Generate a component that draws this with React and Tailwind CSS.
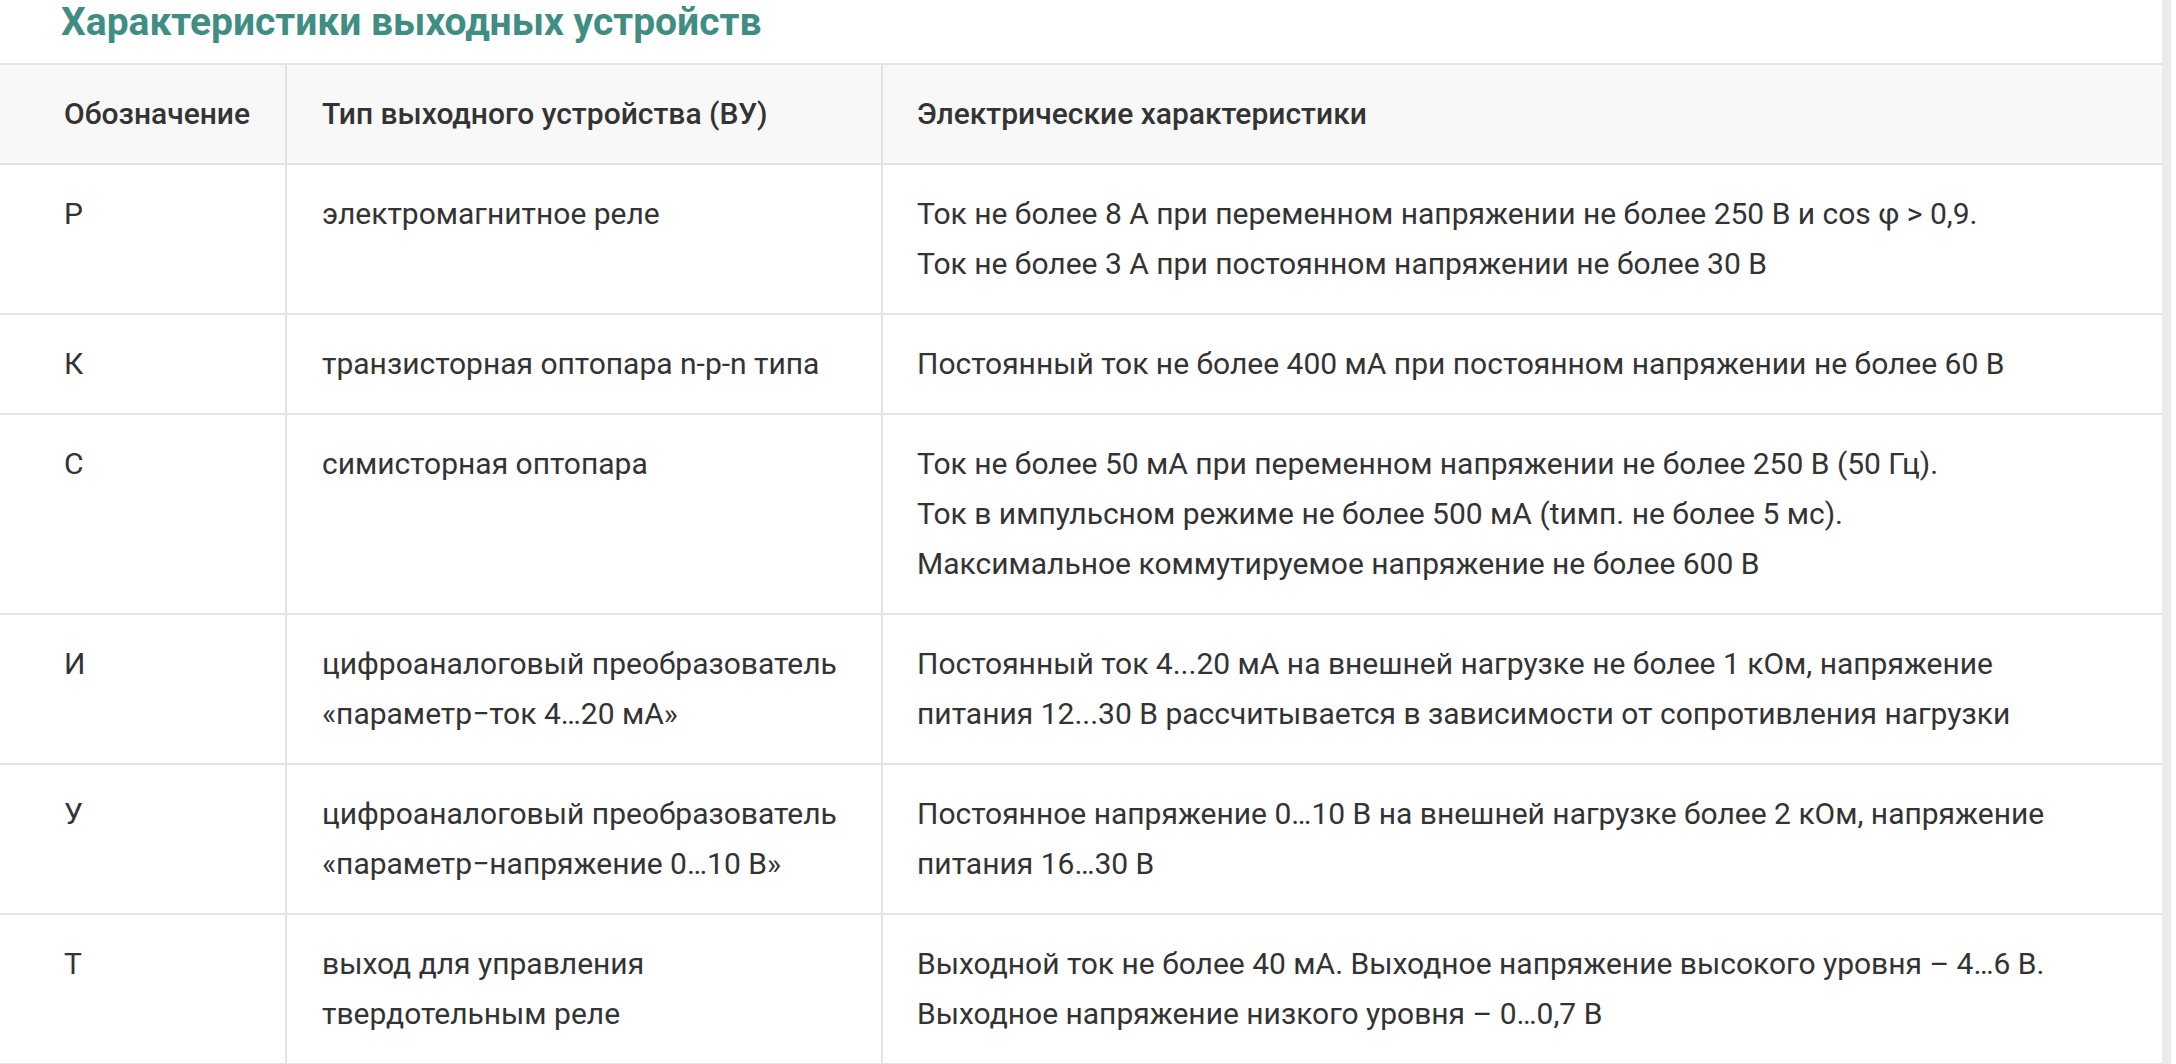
import React from 'react';

const rows = [
  {
    code: 'Р',
    type: ['электромагнитное реле'],
    spec: [
      'Ток не более 8 А при переменном напряжении не более 250 В и cos φ > 0,9.',
      'Ток не более 3 А при постоянном напряжении не более 30 В',
    ],
  },
  {
    code: 'К',
    type: ['транзисторная оптопара n-p-n типа'],
    spec: ['Постоянный ток не более 400 мА при постоянном напряжении не более 60 В'],
  },
  {
    code: 'С',
    type: ['симисторная оптопара'],
    spec: [
      'Ток не более 50 мА при переменном напряжении не более 250 В (50 Гц).',
      'Ток в импульсном режиме не более 500 мА (tимп. не более 5 мс).',
      'Максимальное коммутируемое напряжение не более 600 В',
    ],
  },
  {
    code: 'И',
    type: ['цифроаналоговый преобразователь', '«параметр−ток 4…20 мА»'],
    spec: [
      'Постоянный ток 4...20 мА на внешней нагрузке не более 1 кОм, напряжение',
      'питания 12...30 В рассчитывается в зависимости от сопротивления нагрузки',
    ],
  },
  {
    code: 'У',
    type: ['цифроаналоговый преобразователь', '«параметр−напряжение 0…10 В»'],
    spec: [
      'Постоянное напряжение 0…10 В на внешней нагрузке более 2 кОм, напряжение',
      'питания 16…30 В',
    ],
  },
  {
    code: 'Т',
    type: ['выход для управления', 'твердотельным реле'],
    spec: [
      'Выходной ток не более 40 мА. Выходное напряжение высокого уровня – 4…6 В.',
      'Выходное напряжение низкого уровня – 0…0,7 В',
    ],
  },
];

const Lines = ({ items }) => (
  <>
    {items.map((line, i) => (
      <div key={i} className="whitespace-nowrap">{line}</div>
    ))}
  </>
);

const App = () => {
  return (
    <div className="flex w-full h-[1064px] overflow-hidden bg-white text-[#333333] font-['Roboto',sans-serif]">
      <div className="flex-1 min-w-0">
        {/* Section title */}
        <h2 className="h-[63px] pl-[61px] text-[39px] leading-[44px] font-bold text-[#3f8d83]">
          Характеристики выходных устройств
        </h2>

        {/* Table */}
        <div className="grid grid-cols-[287px_596px_1fr] border-t-2 border-[#e3e3e3] text-[30px] leading-[50px]">
          <div className="bg-[#f8f8f8] border-r-2 border-b-2 border-[#e3e3e3] py-6 pl-[64px] font-medium">
            Обозначение
          </div>
          <div className="bg-[#f8f8f8] border-r-2 border-b-2 border-[#e3e3e3] py-6 pl-[35px] font-medium">
            Тип выходного устройства (ВУ)
          </div>
          <div className="bg-[#f8f8f8] border-b-2 border-[#e3e3e3] py-6 pl-[34px] font-medium">
            Электрические характеристики
          </div>

          {rows.map((row) => (
            <React.Fragment key={row.code}>
              <div className="border-r-2 border-b-2 border-[#e3e3e3] py-6 pl-[64px]">{row.code}</div>
              <div className="border-r-2 border-b-2 border-[#e3e3e3] py-6 pl-[35px]">
                <Lines items={row.type} />
              </div>
              <div className="border-b-2 border-[#e3e3e3] py-6 pl-[34px]">
                <Lines items={row.spec} />
              </div>
            </React.Fragment>
          ))}
        </div>
      </div>

      {/* Scrollbar gutter */}
      <div className="w-[14px] flex">
        <div className="w-[9px] bg-[#ebebeb]" />
        <div className="flex-1 bg-white" />
      </div>
    </div>
  );
};

export default App;
